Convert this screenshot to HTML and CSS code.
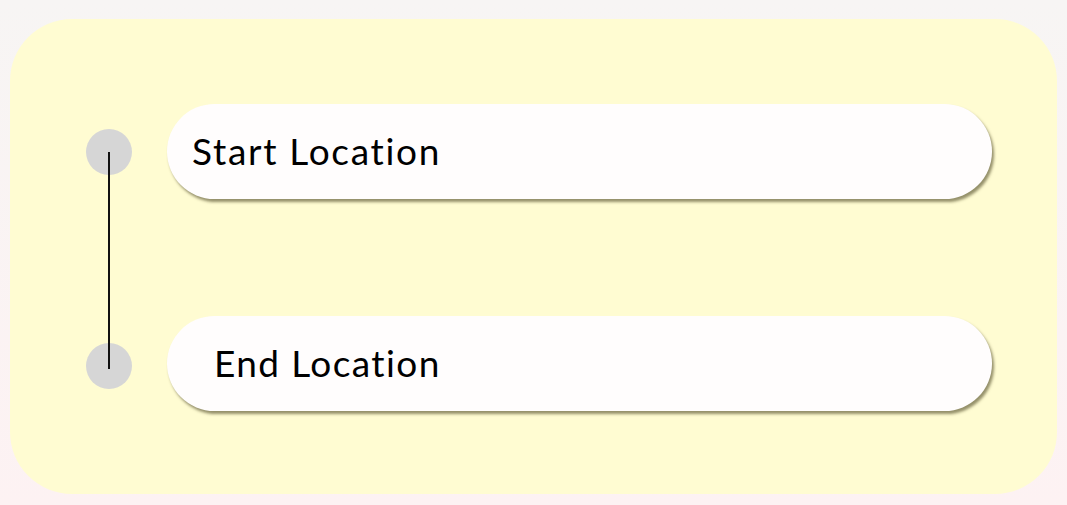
FILE: index.html
```html
<!DOCTYPE html>
<html>
<head>
<meta charset="utf-8">
<link rel="stylesheet" href="styles.css">
</head>
<body>
<div class="card">
  <div class="route">
    <div class="connector"></div>
    <div class="row">
      <div class="dot"></div>
      <div class="field">Start Location</div>
    </div>
    <div class="row">
      <div class="dot dot-end"></div>
      <div class="field field-end">End Location</div>
    </div>
  </div>
</div>
</body>
</html>
```
FILE: styles.css
```css
html, body {
  margin: 0;
  padding: 0;
}
body {
  width: 1067px;
  height: 505px;
  background: linear-gradient(#f7f5f4, #fdf2f3);
  font-family: "Lato", "Open Sans", sans-serif;
  overflow: hidden;
}
.card {
  margin: 19px 10px 0 10px;
  height: 475px;
  box-sizing: border-box;
  background: #fffcd2;
  border-radius: 62px;
  padding: 85px 65px 0 76px;
}
.route {
  position: relative;
  display: flex;
  flex-direction: column;
  gap: 117px;
}
.connector {
  position: absolute;
  left: 22px;
  top: 48px;
  height: 217px;
  width: 1.5px;
  background: #111;
  z-index: 1;
}
.row {
  display: flex;
  align-items: center;
  gap: 35px;
}
.dot {
  width: 46px;
  height: 46px;
  border-radius: 50%;
  background: #d6d6d6;
  flex: none;
}
.dot-end {
  margin-top: 5px;
}
.field {
  flex: 1;
  height: 95px;
  box-sizing: border-box;
  border-radius: 48px;
  background: #fffdfd;
  box-shadow: 2px 3px 3px rgba(60, 55, 20, 0.55);
  display: flex;
  align-items: center;
  padding-left: 25px;
  padding-bottom: 2px;
  font-size: 37px;
  font-weight: 400;
  color: #000;
  letter-spacing: 1.7px;
}
.field-end {
  padding-left: 47px;
  letter-spacing: 1.4px;
}
```
